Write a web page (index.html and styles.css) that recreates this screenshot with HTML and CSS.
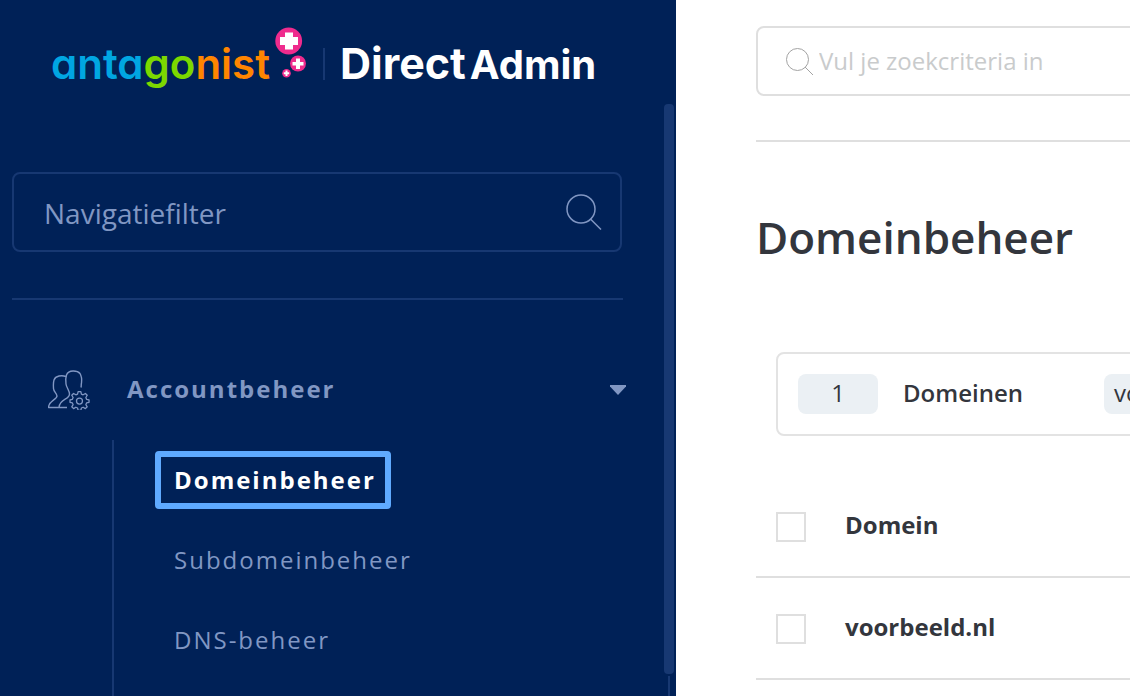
FILE: index.html
```html
<!DOCTYPE html>
<html lang="nl">
<head>
  <meta charset="UTF-8" />
  <meta name="viewport" content="width=device-width, initial-scale=1.0"/>
  <title>Domeinbeheer - DirectAdmin</title>
  <link rel="stylesheet" href="styles.css">
</head>
<body>
  <div class="page">
    <aside class="sidebar">
      <header class="brand">
        <div class="antagonist">
          <span class="blue">anta</span><span class="green">go</span><span class="orange">nist</span>
        </div>
        <svg class="bubbles" width="32" height="52" viewBox="0 0 32 52" aria-hidden="true">
          <circle cx="13.700" cy="15" r="13.400" fill="#ef2b8d"/>
          <path d="M10 6.500h8v4.500h5v8h-5v4.500h-8V19H5v-8h5z" fill="#fff"/>
          <circle cx="23" cy="37.500" r="8" fill="#ef2b8d"/>
          <path d="M21 32.500h4V36h3.500v3.500H25V43h-4v-3.500h-3.500V36H21z" fill="#fff"/>
          <circle cx="11.500" cy="47.200" r="4.300" fill="#ef2b8d"/>
          <path d="M10.500 44.500h2v1.700h1.700v2h-1.700v1.700h-2v-1.700H8.800v-2h1.700z" fill="#fff"/>
        </svg>
        <span class="divider"></span>
        <div class="directadmin">Direct<span>Admin</span></div>
      </header>

      <div class="sidebar-body">
        <nav class="nav">
          <div class="nav-filter">
            <input type="text" placeholder="Navigatiefilter" aria-label="Navigatiefilter">
            <svg width="36" height="36" viewBox="0 0 36 36" aria-hidden="true">
              <circle cx="15" cy="15" r="14"/>
              <path d="M24.500 25L35 35.500"/>
            </svg>
          </div>

          <button class="nav-group" type="button">
            <svg class="users" width="42" height="40" viewBox="0 0 42 40" aria-hidden="true">
              <path d="M18 6.500C14 5 7.500 5.500 6 10 5 13 5.500 17 5.500 18.500c0 3 3.500 5 3.500 7.500 0 3.500-8.500 5-8.500 11.500H19"/>
              <path d="M33 17.500C33.500 15.500 33 14.500 33.500 13c.500-4 0-7-1.500-9.500C29.500 .500 20.500-.500 18.500 5c-1 3-1 6-.500 9 .500 4 3.500 6.500 3.500 10 0 6-10 4.500-10.500 13.500"/>
              <g transform="translate(3 1.500) scale(.91)">
                <path d="M29.800 22h3l.600 2.800 1.900.800 2.500-1.500 2 2-1.500 2.500.800 1.900 2.700.600v2.800l-2.700.600-.800 1.900 1.500 2.400-2 2-2.500-1.500-1.900.800-.600 2.600h-3l-.600-2.600-1.900-.800-2.500 1.500-2-2 1.500-2.400-.800-1.900-2.600-.600v-2.800l2.600-.600.800-1.900-1.500-2.500 2-2 2.500 1.500 1.900-.800z"/>
                <circle cx="31.300" cy="32.500" r="3.300"/>
              </g>
            </svg>
            <span>Accountbeheer</span>
            <svg class="caret" width="16" height="10" viewBox="0 0 16 10" aria-hidden="true">
              <path d="M0 0h16v1.500L8 10 0 1.500z"/>
            </svg>
          </button>

          <ul class="nav-list">
            <li><a class="active" href="#">Domeinbeheer</a></li>
            <li><a href="#">Subdomeinbeheer</a></li>
            <li><a href="#">DNS-beheer</a></li>
          </ul>
        </nav>

        <div class="scrollbar">
          <span class="thumb"></span>
          <span class="track"></span>
        </div>
      </div>
    </aside>

    <main class="content">
      <div class="content-inner">
        <div class="topbar">
          <div class="search">
            <svg width="28" height="28" viewBox="0 0 28 28" aria-hidden="true">
              <circle cx="11.500" cy="12.500" r="11"/>
              <path d="M19 20l8 8"/>
            </svg>
            <input type="text" placeholder="Vul je zoekcriteria in" aria-label="Zoeken">
          </div>
        </div>

        <h1>Domeinbeheer</h1>

        <div class="stats">
          <span class="badge count">1</span>
          <strong>Domeinen</strong>
          <span class="badge">voorbeeld.nl</span>
        </div>

        <table class="domains">
          <thead>
            <tr>
              <td class="check"><input type="checkbox" aria-label="Alles selecteren"></td>
              <th>Domein</th>
            </tr>
          </thead>
          <tbody>
            <tr>
              <td class="check"><input type="checkbox" id="dom1"></td>
              <th><label for="dom1">voorbeeld.nl</label></th>
            </tr>
          </tbody>
        </table>
      </div>
    </main>
  </div>
</body>
</html>
```

FILE: styles.css
```css
* {
  box-sizing: border-box;
  margin: 0;
  padding: 0;
}

body {
  font-family: 'Open Sans', 'Noto Sans', sans-serif;
  font-size: 24px;
  line-height: 32px;
  color: #33363d;
  background: #fff;
}

input,
button {
  font: inherit;
  color: inherit;
  background: none;
  border: none;
  outline: none;
}

.page {
  display: flex;
  min-height: 100vh;
  overflow: hidden;
}

/* sidebar */
.sidebar {
  flex: 0 0 676px;
  display: flex;
  flex-direction: column;
  background: #002157;
  color: #8197c3;
}

.brand {
  display: flex;
  align-items: center;
  height: 104px;
  padding-left: 51px;
  font-family: 'Inter', sans-serif;
  line-height: 48px;
}

.antagonist {
  width: 224px;
  padding-top: 24px;
  font-size: 42px;
  font-weight: 600;
  font-feature-settings: 'cv11';
}

.blue {
  color: #00a6e2;
}

.green {
  color: #7cd800;
}

.orange {
  color: #ff8500;
}

.bubbles {
  flex-shrink: 0;
}

.divider {
  width: 2px;
  height: 32px;
  margin: 24px 15px 0 16px;
  background: #173872;
}

.directadmin {
  padding-top: 24px;
  font-size: 43px;
  font-weight: 700;
  color: #fff;
}

.directadmin span {
  margin-left: 4px;
  font-size: 40px;
}

.sidebar-body {
  flex: 1;
  display: flex;
}

.nav {
  flex: 1;
  display: flex;
  flex-direction: column;
  padding: 68px 0 0 12px;
}

.nav-filter {
  display: flex;
  align-items: center;
  height: 80px;
  margin-right: 42px;
  padding: 0 18px 0 30px;
  border: 2px solid #173872;
  border-radius: 8px;
}

.nav-filter input {
  flex: 1;
  min-width: 0;
  height: 40px;
  padding-top: 2px;
  font-size: 28px;
}

.nav-filter input::placeholder {
  color: #8197c3;
}

.nav-filter svg {
  fill: none;
  stroke: #8197c3;
  stroke-width: 1.5;
}

.nav-group {
  display: flex;
  align-items: center;
  margin-top: 46px;
  padding: 70px 38px 30px 36px;
  border-image: linear-gradient(to right, #173872 610px, transparent 610px) 1;
  border-top: 2px solid #173872;
  font-weight: 700;
  letter-spacing: 2px;
  text-align: left;
  cursor: pointer;
}

.nav-group span {
  flex: 1;
  margin-left: 37px;
  padding-bottom: 2px;
}

.users {
  fill: none;
  stroke: #8197c3;
  stroke-width: 1.4;
  stroke-linejoin: round;
}

.caret {
  fill: #8197c3;
}

.nav-list {
  flex: 1;
  margin-left: 100px;
  padding: 11px 0 0 41px;
  border-left: 2px solid #173872;
  list-style: none;
}

.nav-list li {
  height: 80px;
}

.nav-list a {
  display: inline-block;
  padding: 7px 9px 7px 13px;
  border: 6px solid transparent;
  border-radius: 4px;
  color: #8197c3;
  letter-spacing: 2px;
  line-height: 32px;
  text-decoration: none;
}

.nav-list a.active {
  border-color: #5faaff;
  color: #fff;
  font-weight: 700;
}

.scrollbar {
  display: flex;
  flex-direction: column;
  gap: 2px;
  width: 12px;
}

.thumb {
  flex: 1;
  width: 10px;
  border-radius: 4px;
  background: #173872;
}

.track {
  width: 2px;
  height: 20px;
  margin-left: 4px;
  background: #173872;
}

/* content */
.content {
  flex: 1;
  min-width: 0;
  padding: 26px 0 0 80px;
  overflow: hidden;
}

.content-inner {
  min-width: 600px;
}

.topbar {
  padding-bottom: 44px;
  border-bottom: 2px solid #dfdfdf;
}

.search {
  display: flex;
  align-items: center;
  gap: 5px;
  height: 70px;
  padding: 0 28px;
  border: 2px solid #dfdfdf;
  border-radius: 8px;
}

.search svg {
  fill: none;
  stroke: #a3a3a3;
}

.search input {
  flex: 1;
  height: 36px;
  padding-bottom: 2px;
}

.search input::placeholder {
  color: #c9cbcc;
}

h1 {
  margin: 63px 0 83px;
  font-size: 44px;
  font-weight: 600;
  line-height: 64px;
}

.stats {
  display: flex;
  align-items: center;
  height: 84px;
  margin-left: 20px;
  padding: 0 20px;
  border: 2px solid #e3e3e3;
  border-radius: 8px;
}

.stats strong {
  margin: 0 81px 0 25px;
  padding-bottom: 2px;
  font-weight: 600;
}

.badge {
  height: 40px;
  padding: 0 10px;
  border-radius: 8px;
  background: #ebf0f4;
  line-height: 38px;
}

.badge.count {
  width: 80px;
  text-align: center;
}

.domains {
  width: 100%;
  margin-top: 39px;
  border-collapse: collapse;
}

.domains tr {
  height: 102px;
  border-bottom: 2px solid #dfdfdf;
}

.domains th {
  padding-bottom: 2px;
  font-weight: 700;
  text-align: left;
}

.domains .check {
  width: 89px;
  padding: 2px 0 0 20px;
}

.domains .check input {
  display: block;
  width: 30px;
  height: 30px;
  appearance: none;
  border: 2px solid #dfdfdf;
}
```
